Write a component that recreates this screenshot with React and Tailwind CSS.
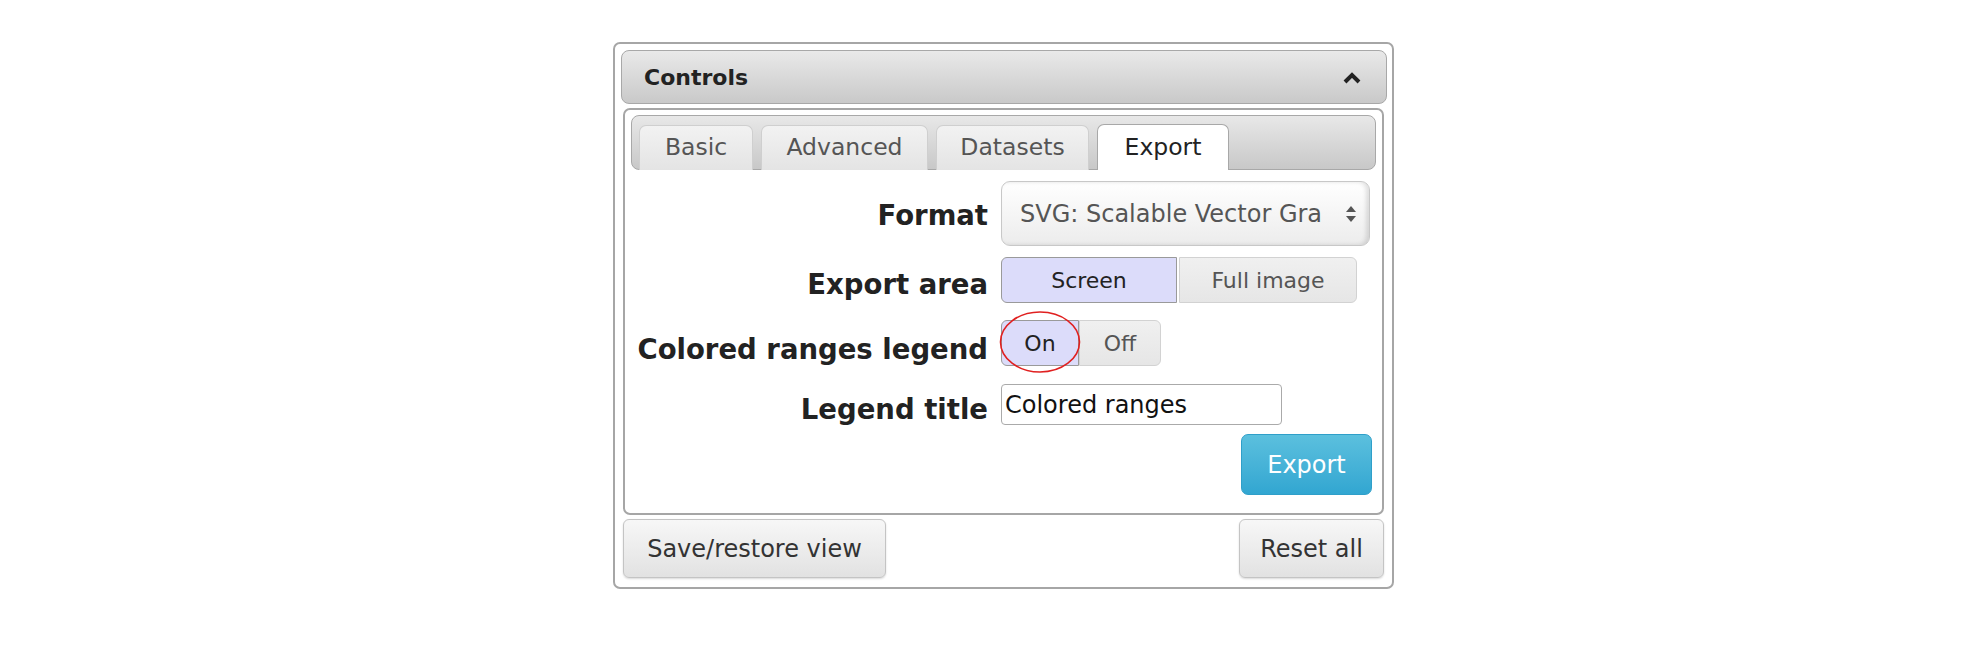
import { useState } from 'react';

const tabs = ['Basic', 'Advanced', 'Datasets', 'Export'];

const App = () => {
  const [activeTab, setActiveTab] = useState('Export');
  const [area, setArea] = useState('Screen');
  const [legend, setLegend] = useState('On');
  const [title, setTitle] = useState('Colored ranges');

  const tabWidths = {
    Basic: 'w-[114px]',
    Advanced: 'w-[167px]',
    Datasets: 'w-[153px]',
    Export: 'w-[132px]',
  };

  return (
    <div className="min-h-screen bg-white font-['DejaVu_Sans',sans-serif] text-[#222]">
      <div className="ml-[613px] pt-[42px]">
        <div className="w-[781px] rounded-[7px] border-2 border-[#a6a6a6] px-[8px] pt-[6px] pb-[9px]">
          {/* Header */}
          <div className="-ml-[2px] -mr-[3px] flex h-[54px] items-center justify-between rounded-[8px] border border-[#a8a8a8] bg-gradient-to-b from-[#e9e9e9] to-[#c9c9c9] pl-[22px] pr-[24px]">
            <span className="text-[22px] font-bold">Controls</span>
            <svg width="20" height="14" viewBox="0 0 20 14" className="mt-[2px]">
              <polyline points="3,11 10,4 17,11" fill="none" stroke="#222" strokeWidth="4" />
            </svg>
          </div>

          {/* Panel */}
          <div className="mt-[4px] rounded-[7px] border-2 border-[#a6a6a6] bg-white px-[6px] pt-[5px] pb-[18px]">
            <div className="flex h-[55px] items-end gap-[8px] rounded-[8px] border border-[#a8a8a8] bg-gradient-to-b from-[#e8e8e8] to-[#c8c8c8] px-[7px]">
              {tabs.map((t) => (
                <button
                  key={t}
                  onClick={() => setActiveTab(t)}
                  className={`${tabWidths[t]} -mb-px flex h-[45px] items-center justify-center rounded-t-[7px] border border-b-0 text-[23.5px] ${
                    activeTab === t
                      ? 'h-[46px] border-[#a8a8a8] bg-white text-[#222]'
                      : 'border-[#cfcfcf] bg-gradient-to-b from-[#f2f2f2] to-[#e4e4e4] text-[#555]'
                  }`}
                >
                  {t}
                </button>
              ))}
            </div>

            {/* Format */}
            <div className="-ml-[6px] mt-[11px] flex h-[65px] items-center">
              <label className="mt-[4px] w-[363px] text-right text-[27.5px] font-bold">Format</label>
              <div className="ml-[13px] flex h-[65px] w-[369px] items-center justify-between rounded-[9px] border border-[#c8c8c8] bg-gradient-to-b from-[#ffffff] to-[#ececec] pl-[18px] pr-[12px] shadow-[inset_-3px_0_4px_rgba(0,0,0,0.12)]">
                <span className="whitespace-nowrap text-[24px] text-[#555]">SVG: Scalable Vector Gra</span>
                <svg width="12" height="22" viewBox="0 0 12 22">
                  <polygon points="6,3 11,9 1,9" fill="#555" />
                  <polygon points="1,13 11,13 6,19" fill="#555" />
                </svg>
              </div>
            </div>

            {/* Export area */}
            <div className="-ml-[6px] mt-[11px] flex h-[46px] items-center">
              <label className="mt-[10px] w-[363px] text-right text-[27.5px] font-bold">Export area</label>
              <div className="ml-[13px] flex">
                {['Screen', 'Full image'].map((a, i) => (
                  <button
                    key={a}
                    onClick={() => setArea(a)}
                    className={`flex h-[46px] items-center justify-center border text-[22px] ${
                      i === 0 ? 'w-[176px] rounded-l-[6px]' : 'ml-[2px] w-[178px] rounded-r-[6px]'
                    } ${
                      area === a
                        ? 'border-[#9a9a9a] bg-[#dcdcfa] text-[#222]'
                        : 'border-[#d2d2d2] bg-gradient-to-b from-[#f0f0f0] to-[#e6e6e6] text-[#555]'
                    }`}
                  >
                    {a}
                  </button>
                ))}
              </div>
            </div>

            {/* Colored ranges legend */}
            <div className="-ml-[6px] mt-[17px] flex h-[46px] items-center">
              <label className="mt-[14px] w-[363px] text-right text-[27.5px] font-bold">Colored ranges legend</label>
              <div className="relative ml-[13px] flex">
                {['On', 'Off'].map((o, i) => (
                  <button
                    key={o}
                    onClick={() => setLegend(o)}
                    className={`flex h-[46px] items-center justify-center border text-[22px] ${
                      i === 0 ? 'w-[78px] rounded-l-[6px]' : 'w-[82px] rounded-r-[6px]'
                    } ${
                      legend === o
                        ? 'border-[#9a9a9a] bg-[#dcdcfa] text-[#222]'
                        : 'border-[#d2d2d2] bg-gradient-to-b from-[#f0f0f0] to-[#e6e6e6] text-[#555]'
                    }`}
                  >
                    {o}
                  </button>
                ))}
                {/* annotation circle */}
                <svg
                  width="84"
                  height="64"
                  viewBox="0 0 84 64"
                  className="pointer-events-none absolute -left-[2px] -top-[10px]"
                >
                  <ellipse cx="41" cy="32" rx="39.5" ry="30" fill="none" stroke="#e02020" strokeWidth="1.6" />
                </svg>
              </div>
            </div>

            {/* Legend title */}
            <div className="-ml-[6px] mt-[18px] flex h-[41px] items-center">
              <label className="mt-[11px] w-[363px] text-right text-[27.5px] font-bold">Legend title</label>
              <input
                value={title}
                onChange={(e) => setTitle(e.target.value)}
                className="ml-[13px] h-[41px] w-[281px] rounded-[4px] border border-[#aaa] bg-white px-[3px] text-[24px] text-[#111] outline-none"
              />
            </div>

            <div className="mt-[9px] flex justify-end pr-[4px]">
              <button className="h-[61px] w-[131px] rounded-[7px] border border-[#2f9fc9] bg-gradient-to-b from-[#5bc0de] to-[#31a6d1] text-[24px] text-white">
                Export
              </button>
            </div>
          </div>

          {/* Footer */}
          <div className="mt-[4px] flex justify-between">
            <button className="h-[59px] w-[263px] rounded-[6px] border border-[#c4c4c4] bg-gradient-to-b from-[#f7f7f7] to-[#e2e2e2] text-[24px] text-[#333] shadow-[0_1px_2px_rgba(0,0,0,0.15)]">
              Save/restore view
            </button>
            <button className="h-[59px] w-[145px] rounded-[6px] border border-[#c4c4c4] bg-gradient-to-b from-[#f7f7f7] to-[#e2e2e2] text-[24px] text-[#333] shadow-[0_1px_2px_rgba(0,0,0,0.15)]">
              Reset all
            </button>
          </div>
        </div>
      </div>
    </div>
  );
};

export default App;
